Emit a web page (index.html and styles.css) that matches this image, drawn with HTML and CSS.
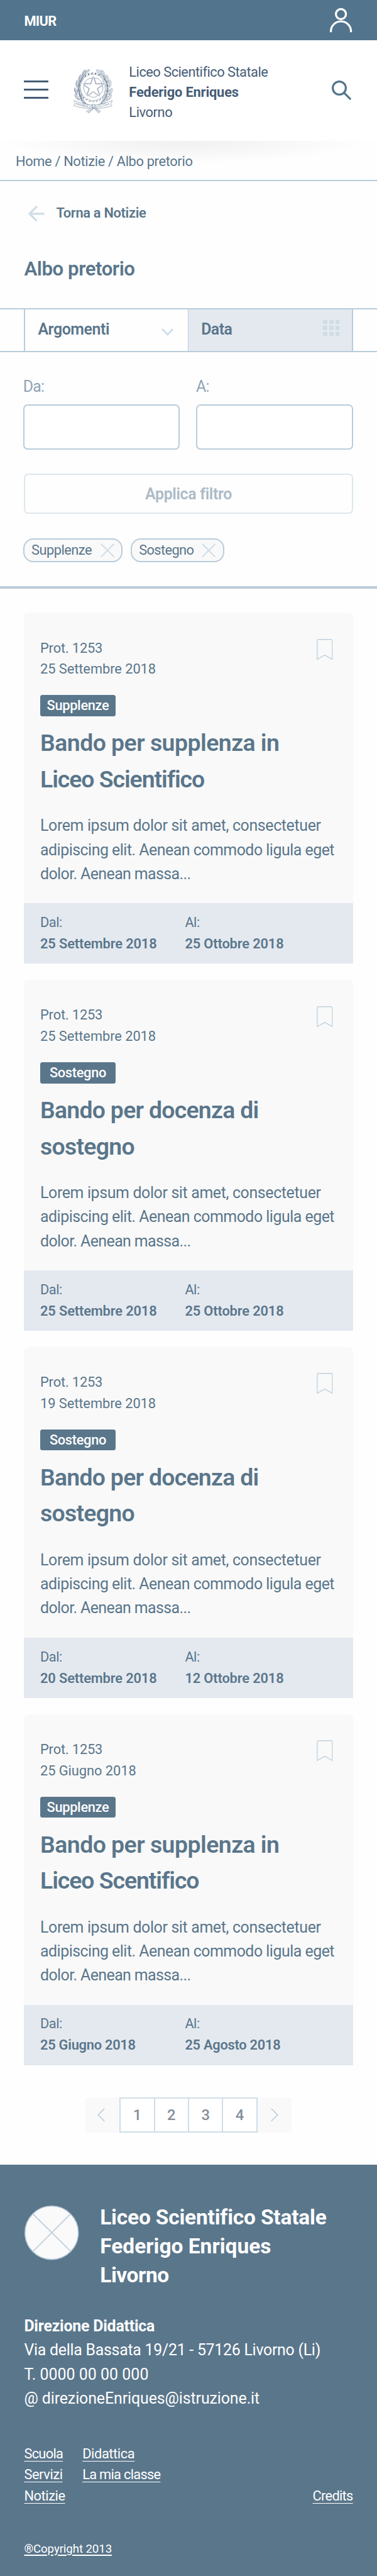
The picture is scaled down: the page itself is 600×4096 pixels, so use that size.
FILE: index.html
```html
<!DOCTYPE html>
<html lang="it">
<head>
<meta charset="utf-8">
<title>Albo pretorio</title>
<link rel="stylesheet" href="styles.css">
</head>
<body>
<svg class="defs" width="0" height="0" aria-hidden="true">
  <symbol id="bookmark" viewBox="0 0 32 42"><path d="M1 40.500V4Q1 1 4 1H28Q31 1 31 4V40.500L16 32Z" fill="none" stroke="#c0d1de" stroke-width="1.700"/></symbol>
  <symbol id="cross" viewBox="0 0 28 28"><path d="M1 1L27 27M27 1L1 27" fill="none" stroke="#cfdde7" stroke-width="2.500"/></symbol>
</svg>
<header>
  <div class="topbar">
    <span class="miur">MIUR</span>
    <svg class="user" viewBox="0 0 44 50"><circle cx="22" cy="13" r="10" /><path d="M2 49V47A20 19.500 0 0 1 42 47V49"/></svg>
  </div>
  <div class="masthead">
    <div class="burger"><i></i><i></i><i></i></div>
    <svg class="emblem" viewBox="10 10 238 272">
      <defs>
        <path id="leaf" d="M0 0C-10-14-9-31 0-44C9-31 10-14 0 0ZM0 0V-38M-3-8L-3-32"/>
        <path id="oak" d="M0 0C-7-1-7-8-4-10C-12-12-11-21-5-21C-12-26-9-33-4-32C-6-38-2-42 0-42C4-42 6-38 4-32C10-33 12-26 5-21C12-20 12-12 4-10C8-7 7-1 0 0ZM0 0V-34"/>
        <path id="sector" d="M0 27L-28 49Q0 68 28 49Z"/>
      </defs>
      <g fill="none" stroke="#4e6580" stroke-width="1.800">
        <circle cx="130" cy="129" r="78"/>
        <circle cx="130" cy="129" r="83" stroke-width="8" stroke-dasharray="11 10"/>
        <circle cx="130" cy="129" r="82" stroke="#fff" stroke-width="7" stroke-dasharray="8 13" stroke-dashoffset="-1.500"/>
        <g transform="translate(130 129)">
          <use href="#sector"/><use href="#sector" transform="rotate(72)"/><use href="#sector" transform="rotate(144)"/><use href="#sector" transform="rotate(216)"/><use href="#sector" transform="rotate(288)"/>
          <path d="M0-64L14-20L61-20L23 7L38 52L0 24L-38 52L-23 7L-61-20L-14-20Z" fill="#fff"/>
        </g>
        <g fill="#fff">
          <use href="#leaf" transform="translate(75 53) rotate(48)"/><use href="#leaf" transform="translate(65 65) rotate(22)"/><use href="#leaf" transform="translate(54 84) rotate(42)"/>
          <use href="#leaf" transform="translate(46 97) rotate(12)"/><use href="#leaf" transform="translate(40 121) rotate(34)"/><use href="#leaf" transform="translate(34 130) rotate(0)"/>
          <use href="#leaf" transform="translate(38 157) rotate(18)"/><use href="#leaf" transform="translate(34 172) rotate(-20)"/><use href="#leaf" transform="translate(50 187) rotate(5)"/>
          <use href="#leaf" transform="translate(47 204) rotate(-38)"/><use href="#leaf" transform="translate(67 212) rotate(-12)"/><use href="#leaf" transform="translate(82 226) rotate(-43)"/>
          <use href="#oak" transform="translate(181 53) rotate(-48)"/><use href="#oak" transform="translate(194 66) rotate(-22)"/><use href="#oak" transform="translate(203 82) rotate(-48)"/>
          <use href="#oak" transform="translate(215 97) rotate(-12)"/><use href="#oak" transform="translate(214 119) rotate(-40)"/><use href="#oak" transform="translate(226 128) rotate(2)"/>
          <use href="#oak" transform="translate(217 155) rotate(-22)"/><use href="#oak" transform="translate(224 173) rotate(22)"/><use href="#oak" transform="translate(207 187) rotate(-8)"/>
          <use href="#oak" transform="translate(209 205) rotate(42)"/><use href="#oak" transform="translate(191 212) rotate(12)"/><use href="#oak" transform="translate(178 225) rotate(48)"/>
        </g>
        <path d="M72 60Q22 130 62 203Q86 232 122 240M187 60Q240 130 196 203Q173 232 142 240" stroke-width="3"/>
        <g fill="#fff">
          <path d="M128 243L88 270L94 275L134 249ZM134 249L99 278L106 280L140 247ZM135 243L174 270L168 276L130 248ZM132 249L159 280L166 277L138 246Z"/>
          <path d="M15 207L28 212Q74 233 121 233L123 251Q74 258 15 237L22 225Z"/>
          <path d="M243 207L231 212Q188 233 142 233L141 251Q188 258 241 237L235 225Z"/>
          <path d="M121 233Q131 226 142 233Q145 244 137 252L123 251ZM128 231Q123 240 129 250M135 231Q139 240 132 251"/>
        </g>
        <path id="ribbonL" d="M25 229Q73 249 122 248" stroke="none"/>
        <path id="ribbonR" d="M147 248Q190 247 237 227" stroke="none"/>
      </g>
      <text class="motto"><textPath href="#ribbonL" textLength="92">REPVBBLICA</textPath></text>
      <text class="motto"><textPath href="#ribbonR" textLength="84">ITALIANA</textPath></text>
    </svg>
    <div class="school">
      <div class="s1">Liceo Scientifico Statale</div>
      <div class="s2">Federigo Enriques</div>
      <div class="s3">Livorno</div>
    </div>
    <svg class="search" viewBox="0 0 39 39"><circle cx="15" cy="15" r="13"/><path d="M24.500 24.500L36.500 36.500"/></svg>
  </div>
</header>
<nav class="breadcrumb">Home / Notizie / Albo pretorio</nav>
<section class="intro">
  <div class="back">
    <svg viewBox="0 0 32 32"><path d="M17 1.500L2.500 16L17 30.500M2.500 16H32"/></svg>
    <span>Torna a Notizie</span>
  </div>
  <h1>Albo pretorio</h1>
</section>
<div class="tabs">
  <div class="tab"><span>Argomenti</span><svg class="chev" viewBox="0 0 24 15"><path d="M1.500 1.500L12 12.500L22.500 1.500"/></svg></div>
  <div class="tab active"><span class="t-data">Data</span>
    <div class="grid"><i></i><i></i><i></i><i></i><i></i><i></i><i></i><i></i><i></i></div>
  </div>
</div>
<section class="filters">
  <div class="fields">
    <label><span class="lab">Da:</span><input type="text"></label>
    <label><span class="lab">A:</span><input type="text"></label>
  </div>
  <button class="apply">Applica filtro</button>
  <div class="tags">
    <div class="tag t1"><span>Supplenze</span><svg><use href="#cross"/></svg></div>
    <div class="tag t2"><span>Sostegno</span><svg><use href="#cross"/></svg></div>
  </div>
</section>
<main class="cards">
  <article class="card">
    <div class="head"><div class="meta"><div class="prot">Prot. 1253</div><div class="date">25 Settembre 2018</div></div><svg class="bm"><use href="#bookmark"/></svg></div>
    <div class="pill">Supplenze</div>
    <h2><span class="h-a">Bando per supplenza in</span><br><span class="h-b">Liceo Scientifico</span></h2>
    <p><span class="p-a">Lorem ipsum dolor sit amet, consectetuer</span><br><span class="p-b">adipiscing elit. Aenean commodo ligula eget</span><br><span class="p-c">dolor. Aenean massa...</span></p>
    <div class="period"><div><span>Dal:</span><b>25 Settembre 2018</b></div><div><span>Al:</span><b>25 Ottobre 2018</b></div></div>
  </article>
  <article class="card">
    <div class="head"><div class="meta"><div class="prot">Prot. 1253</div><div class="date">25 Settembre 2018</div></div><svg class="bm"><use href="#bookmark"/></svg></div>
    <div class="pill">Sostegno</div>
    <h2><span class="h-c">Bando per docenza di</span><br><span class="h-c">sostegno</span></h2>
    <p><span class="p-a">Lorem ipsum dolor sit amet, consectetuer</span><br><span class="p-b">adipiscing elit. Aenean commodo ligula eget</span><br><span class="p-c">dolor. Aenean massa...</span></p>
    <div class="period"><div><span>Dal:</span><b>25 Settembre 2018</b></div><div><span>Al:</span><b>25 Ottobre 2018</b></div></div>
  </article>
  <article class="card">
    <div class="head"><div class="meta"><div class="prot">Prot. 1253</div><div class="date">19 Settembre 2018</div></div><svg class="bm"><use href="#bookmark"/></svg></div>
    <div class="pill">Sostegno</div>
    <h2><span class="h-c">Bando per docenza di</span><br><span class="h-c">sostegno</span></h2>
    <p><span class="p-a">Lorem ipsum dolor sit amet, consectetuer</span><br><span class="p-b">adipiscing elit. Aenean commodo ligula eget</span><br><span class="p-c">dolor. Aenean massa...</span></p>
    <div class="period"><div><span>Dal:</span><b>20 Settembre 2018</b></div><div><span>Al:</span><b>12 Ottobre 2018</b></div></div>
  </article>
  <article class="card">
    <div class="head"><div class="meta"><div class="prot">Prot. 1253</div><div class="date">25 Giugno 2018</div></div><svg class="bm"><use href="#bookmark"/></svg></div>
    <div class="pill">Supplenze</div>
    <h2><span class="h-a">Bando per supplenza in</span><br><span class="h-b">Liceo Scentifico</span></h2>
    <p><span class="p-a">Lorem ipsum dolor sit amet, consectetuer</span><br><span class="p-b">adipiscing elit. Aenean commodo ligula eget</span><br><span class="p-c">dolor. Aenean massa...</span></p>
    <div class="period"><div><span>Dal:</span><b class="tight">25 Giugno 2018</b></div><div><span>Al:</span><b class="tight">25 Agosto 2018</b></div></div>
  </article>
</main>
<nav class="pager">
  <div class="arrow prev"><svg viewBox="0 0 15 27"><path d="M14 1L1.500 13.500L14 26"/></svg></div>
  <div class="nums"><span>1</span><span>2</span><span>3</span><span>4</span></div>
  <div class="arrow next"><svg viewBox="0 0 15 27"><path d="M1 1L13.500 13.500L1 26"/></svg></div>
</nav>
<footer>
  <div class="brand">
    <svg viewBox="0 0 108 108"><circle cx="54" cy="54" r="53" fill="#fafafa" stroke="#b9ccda" stroke-width="2"/><path d="M17 17L92 91M91 17L17 91" stroke="#b9ccda" stroke-width="2"/></svg>
    <div class="name"><div class="n1">Liceo Scientifico Statale</div><div class="n2">Federigo Enriques</div><div class="n3">Livorno</div></div>
  </div>
  <address>
    <div class="a1">Direzione Didattica</div>
    <div class="a2">Via della Bassata 19/21 - 57126 Livorno (Li)</div>
    <div class="a3">T. 0000 00 00 000</div>
    <div class="a4">@ direzioneEnriques@istruzione.it</div>
  </address>
  <div class="links">
    <div class="c1"><div><a class="l1">Scuola</a></div><div><a>Servizi</a></div><div><a>Notizie</a></div></div>
    <div class="c2"><div><a>Didattica</a></div><div><a class="l1">La mia classe</a></div></div>
    <div class="c3"><a class="l1">Credits</a></div>
  </div>
  <div class="copy"><a>®Copyright 2013</a></div>
</footer>
</body>
</html>
```
FILE: styles.css
```css
* { box-sizing: border-box; }
html, body { margin: 0; padding: 0; }
body { width: 600px; height: 4096px; background: #fefefe; color: #5a768b; font-family: Roboto, "Liberation Sans", sans-serif; font-size: 21.8px; overflow: hidden; }
svg { display: block; flex: none; overflow: visible; }
.defs { position: absolute; }
span, div, b, a { white-space: nowrap; }

.topbar { height: 64px; background: #52758d; display: flex; justify-content: space-between; padding: 0 39.6px 0 38.4px; }
.miur { color: #fff; font-weight: 700; line-height: 67px; letter-spacing: -.65px; }
.user { width: 35.2px; height: 40px; margin-top: 12.4px; fill: none; stroke: #fff; stroke-width: 4; }

.masthead { height: 160px; display: flex; background: #fff; }
.burger { margin: 64px 0 0 38.4px; width: 38.4px; display: flex; flex-direction: column; gap: 9.6px; height: 29px; }
.burger i { height: 3.2px; background: #455d75; }
.emblem { width: 66.400px; height: 73px; margin: 43px 0 0 38.2px; }
.motto { font: 16px "Liberation Serif", serif; fill: #4e6580; }
.school { margin: 35px 0 0 24px; width: 322px; line-height: 32px; color: #465d76; }
.s1 { letter-spacing: -.5px; }
.s2 { letter-spacing: -.16px; font-weight: 700; }
.s3 { letter-spacing: -.42px; }
.search { width: 31.2px; height: 31.2px; margin: 64px 0 0 auto; margin-right: 40.800px; fill: none; stroke: #52758d; stroke-width: 4; stroke-linecap: round; }

.breadcrumb { height: 64px; padding: 3px 0 0 25px; line-height: 60px; letter-spacing: -.33px; border-bottom: 2px solid #b9ccda; background: radial-gradient(ellipse 290px 36px at 295px 0, rgba(0,0,0,.055), rgba(0,0,0,.035) 40%, rgba(0,0,0,0)) no-repeat; }

.intro { height: 201.500px; padding: 30px 0 0 38.4px; }
.back { height: 40px; display: flex; align-items: center; font-weight: 600; letter-spacing: -.29px; }
.back svg { width: 25.600px; height: 25.600px; margin: 3px 19px 0 6.400px; fill: none; stroke: #cfdde7; stroke-width: 4; }
h1 { margin: 50px 0 0; font-size: 31.2px; line-height: 40px; font-weight: 600; letter-spacing: -.44px; }

.tabs { height: 70.500px; border: solid #b9ccda; border-width: 2px 0; padding: 0 38.4px; display: grid; grid-template-columns: 260.800px 262.400px; }
.tab { border-left: 2px solid #b9ccda; display: flex; justify-content: space-between; font-size: 24.9px; line-height: 64px; font-weight: 600; letter-spacing: -.42px; padding-left: 20px; }
.tab.active { background: #e4e9f0; border-right: 2px solid #b9ccda; border-left-width: 1.600px; padding-right: 19.400px; }
.t-data { letter-spacing: -.54px; }
.chev { width: 19.200px; height: 12px; margin: 30px 22.600px 0 0; fill: none; stroke: #cfdde7; stroke-width: 3.500; }
.grid { display: grid; grid-template-columns: repeat(3, 6.600px); grid-auto-rows: 6.600px; gap: 3px; margin-top: 17px; }
.grid i { background: #cfdce5; }

.filters { height: 376px; padding: 40px 38.4px 0; border-bottom: 4px solid #b9ccda; }
.fields { display: flex; gap: 25.600px; margin-left: -1.600px; }
.fields label { flex: 1; display: block; }
.lab { display: block; height: 30px; line-height: 30px; font-size: 24.9px; color: #91a4b4; letter-spacing: -.8px; }
.fields input { display: block; width: 100%; height: 72px; margin: 13px 0 0; border: 2px solid #b9ccda; border-radius: 7px; background: #fff; }
.apply { display: block; width: 100%; height: 64px; margin-top: 38px; padding: 0; background: #fefefe; border: 2px solid #dde7ed; border-radius: 7px; font: 600 24.9px Roboto, "Liberation Sans", sans-serif; letter-spacing: -.33px; color: #acbbc6; }
.tags { display: flex; gap: 12.8px; margin: 38.700px 0 0 -1.600px; }
.tag { height: 38.400px; border: 2px solid #b9ccda; border-radius: 16px; background: #f9f9f9; display: flex; align-items: center; justify-content: space-between; padding: 0 11px 0 11.200px; line-height: 36px; }
.tag svg { width: 22.400px; height: 22.400px; }
.t1 { width: 158.400px; letter-spacing: -.5px; }
.t2 { width: 148.800px; letter-spacing: -.6px; }

.cards { padding: 38.200px 38.400px 0; display: flex; flex-direction: column; gap: 25.600px; }
.card { height: 558.200px; background: #f9f9f9; border-radius: 7px 7px 0 0; padding-left: 25.600px; display: flex; flex-direction: column; }
.head { display: flex; justify-content: space-between; padding: 39.500px 32px 0 0; height: 106.700px; line-height: 33.600px; }
.prot { letter-spacing: -.14px; }
.date { letter-spacing: -.04px; }
.bm { width: 25.600px; height: 33.600px; margin-top: 2.100px; }
.pill { width: 120px; height: 33.600px; margin-top: 24.400px; background: #5a768b; border-radius: 3.500px; color: #fff; text-align: center; line-height: 33.600px; font-weight: 500; letter-spacing: -.3px; }
h2 { margin: 14.400px 0 0; font-size: 37.400px; line-height: 57.600px; font-weight: 600; letter-spacing: -.52px; }
.h-b { letter-spacing: -1.050px; }
.h-c { letter-spacing: -.72px; }
.card p { margin: 25.900px 0 0; font-size: 24.900px; line-height: 38.200px; }
.p-a { letter-spacing: -.35px; }
.p-b { letter-spacing: -.49px; }
.p-c { letter-spacing: -.58px; }
.period { margin: auto 0 0 -25.600px; height: 96px; background: #e4e9f0; padding: 13.700px 0 0 25.600px; line-height: 33.900px; display: grid; grid-template-columns: 230.400px 1fr; }
.period span, .period b { display: block; }
.period span { letter-spacing: -.5px; }
.period b { font-weight: 600; letter-spacing: -.12px; }
.period b.tight { letter-spacing: -.24px; }

.pager { margin: 51.200px auto; width: 328px; height: 56px; display: flex; }
.arrow { width: 54.400px; background: #f9f9f9; display: flex; align-items: center; justify-content: center; }
.prev { border-radius: 4px 0 0 4px; }
.next { border-radius: 0 4px 4px 0; }
.arrow svg { width: 12px; height: 21.600px; fill: none; stroke: #b9ccda; stroke-width: 2; }
.prev svg { margin-right: 4px; }
.nums { flex: 1; display: flex; border: 2px solid #cfdde7; background: #fff; }
.nums span { flex: 1; text-align: center; line-height: 53px; font-size: 23.800px; color: #838f99; font-weight: 500; }
.nums span + span { border-left: 2px solid #cfdde7; }

footer { background: #5a768b; color: #fff; height: 655px; padding: 60.500px 38.400px 0; }
.brand { display: flex; gap: 33.600px; font-size: 33.500px; font-weight: 700; line-height: 46.400px; }
.brand svg { width: 86.400px; height: 86.400px; margin: 4.200px 0 0 .8px; }
.n1 { letter-spacing: -.2px; }
.n3 { letter-spacing: -.42px; }
address { font-style: normal; margin-top: 38.200px; font-size: 24.900px; line-height: 38.350px; }
.a1 { font-weight: 700; letter-spacing: -.21px; }
.a2 { letter-spacing: -.26px; }
.a3 { letter-spacing: .04px; }
.a4 { letter-spacing: -.09px; }
.links { display: flex; margin-top: 51.200px; line-height: 33.700px; }
.links a { letter-spacing: -.4px; text-decoration: underline; text-decoration-thickness: 1px; text-underline-offset: 3.500px; }
.links .l1 { letter-spacing: -.7px; }
.c1 { width: 92.800px; }
.c3 { margin-left: auto; align-self: flex-end; }
.copy { margin-top: 55px; font-size: 18.700px; line-height: 24px; letter-spacing: -.1px; }
.copy a { text-decoration: underline; text-decoration-thickness: 1.600px; text-underline-offset: 2.500px; }
```
